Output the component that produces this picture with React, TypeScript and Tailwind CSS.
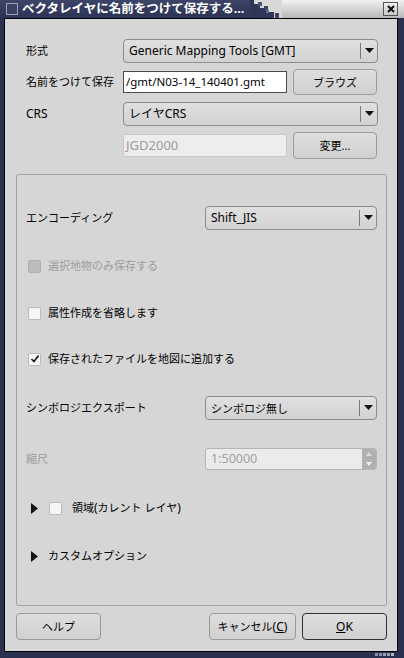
import React from "react";

const F = "font-['Noto_Sans','Noto_Sans_CJK_JP',sans-serif]";

function Arrow() {
  return (
    <svg width="9" height="6" viewBox="0 0 9 6">
      <polygon points="0,0 9,0 4.5,5" fill="#111" />
    </svg>
  );
}

function Combo({ text, className = "" }: { text: string; className?: string }) {
  return (
    <div
      className={`flex items-center h-full rounded-[4px] border border-[#8c8c8c] bg-gradient-to-b from-[#e0e0e0] to-[#d2d2d2] ${className}`}
    >
      <div className="flex-1 pl-[5px] text-[12px] text-black leading-none whitespace-nowrap">{text}</div>
      <div className="w-px h-[16px] bg-[#7a7a7a]" />
      <div className="w-[16px] flex items-center justify-center">
        <Arrow />
      </div>
    </div>
  );
}

function Btn({ children, className = "", strong = false }: { children: React.ReactNode; className?: string; strong?: boolean }) {
  return (
    <div
      className={`flex items-center justify-center rounded-[4px] border ${
        strong ? "border-[#303030]" : "border-[#9a9a9a]"
      } bg-gradient-to-b from-[#dedede] to-[#d0d0d0] text-[12px] text-black leading-none ${className}`}
    >
      {children}
    </div>
  );
}

function Check({ checked = false, disabled = false }: { checked?: boolean; disabled?: boolean }) {
  return (
    <div
      className={`w-[13px] h-[13px] rounded-[2px] border flex items-center justify-center ${
        disabled ? "bg-[#bdbdbd] border-[#b0b0b0]" : "bg-[#f6f6f6] border-[#bababa]"
      }`}
    >
      {checked && (
        <svg width="10" height="10" viewBox="0 0 10 10">
          <polyline points="1.5,5 4,7.5 8.5,1.5" fill="none" stroke="#111" strokeWidth="1.6" />
        </svg>
      )}
    </div>
  );
}

function Tri() {
  return (
    <svg width="7" height="11" viewBox="0 0 7 11">
      <polygon points="0,0 7,5.5 0,11" fill="#111" />
    </svg>
  );
}

export default function App() {
  return (
    <div className={`w-[404px] h-[658px] bg-[#2a3050] flex flex-col ${F}`}>
      {/* Title bar */}
      <div className="h-[18px] flex">
        <div className="w-[250px] bg-gradient-to-b from-[#3c4468] to-[#2c3354] flex items-center">
          <div className="ml-[6px] w-[12px] h-[12px] border border-[#9aa0b8] bg-[#3a4262]" />
          <div className="ml-[4px] text-[12.5px] font-bold text-white leading-none whitespace-nowrap">
            ベクタレイヤに名前をつけて保存する...
          </div>
        </div>
        <svg width="32" height="18" viewBox="0 0 32 18" className="shrink-0">
          <rect x="0" y="0" width="32" height="18" fill="#d8d8d8" />
          <rect x="0" y="0" width="4" height="18" fill="#2f3658" />
          <rect x="4" y="4" width="6" height="14" fill="#2f3658" />
          <rect x="10" y="8" width="8" height="10" fill="#2f3658" />
          <rect x="8" y="2" width="4" height="4" fill="#4a5275" />
          <rect x="14" y="6" width="4" height="4" fill="#3a4266" />
          <rect x="18" y="12" width="6" height="6" fill="#2f3658" />
          <rect x="25" y="13" width="4" height="5" fill="#3a4266" />
          <rect x="16" y="10" width="3" height="3" fill="#6a7090" />
        </svg>
        <div className="flex-1 bg-gradient-to-b from-[#f2f2f2] to-[#b8b8b8] flex items-center justify-end pr-[6px]">
          <div className="w-[15px] h-[14px] border border-[#555] bg-gradient-to-b from-[#f0f0f0] to-[#c8c8c8] flex items-center justify-center">
            <svg width="8" height="8" viewBox="0 0 8 8">
              <path d="M1 1 L7 7 M7 1 L1 7" stroke="#111" strokeWidth="2" />
            </svg>
          </div>
        </div>
      </div>

      {/* Content */}
      <div className="ml-[4px] w-[394px] h-[634px] border border-black bg-[#d6d6d6] flex flex-col">
        {/* top form */}
        <div className="pl-[21px] pr-[19px] pt-[20px] flex flex-col">
          <div className="flex h-[24px] items-center">
            <div className="w-[97px] text-[11px] text-black">形式</div>
            <div className="flex-1 h-full">
              <Combo text="Generic Mapping Tools [GMT]" />
            </div>
          </div>
          <div className="flex h-[26px] items-center mt-[6px]">
            <div className="w-[97px] text-[11px] text-black whitespace-nowrap">名前をつけて保存</div>
            <div className="w-[164px] h-[22px] bg-white border border-[#4a4a4a] flex items-center overflow-hidden">
              <span className="pl-[2px] text-[11.5px] text-black leading-none whitespace-nowrap">/gmt/N03-14_140401.gmt</span>
            </div>
            <Btn className="ml-[6px] w-[84px] h-full">
              <span className="text-[11px]">ブラウズ</span>
            </Btn>
          </div>
          <div className="flex h-[24px] items-center mt-[7px]">
            <div className="w-[97px] text-[12px] text-black">CRS</div>
            <div className="flex-1 h-full">
              <Combo text="レイヤCRS" />
            </div>
          </div>
          <div className="flex h-[27px] items-center mt-[6px]">
            <div className="w-[97px]" />
            <div className="w-[164px] h-[23px] bg-[#ededed] border border-[#c8c8c8] flex items-center">
              <span className="pl-[2px] text-[13px] text-[#9b9b9b] leading-none">JGD2000</span>
            </div>
            <Btn className="ml-[6px] w-[84px] h-full">
              <span className="text-[11px]">変更...</span>
            </Btn>
          </div>
        </div>

        {/* group box */}
        <div className="ml-[11px] mt-[15px] w-[371px] h-[432px] border border-[#a2a2a2] rounded-[2px] pl-[9px] pr-[9px] flex flex-col">
          <div className="flex h-[24px] items-center mt-[31px]">
            <div className="w-[179px] text-[11px] text-black">エンコーディング</div>
            <div className="flex-1 h-full">
              <Combo text="Shift_JIS" />
            </div>
          </div>
          <div className="flex h-[20px] items-center mt-[26px] pl-[2px]">
            <Check disabled />
            <span className="ml-[7px] text-[11px] text-[#9c9c9c]">選択地物のみ保存する</span>
          </div>
          <div className="flex h-[20px] items-center mt-[27px] pl-[2px]">
            <Check />
            <span className="ml-[7px] text-[11px] text-black">属性作成を省略します</span>
          </div>
          <div className="flex h-[20px] items-center mt-[26px] pl-[2px]">
            <Check checked />
            <span className="ml-[7px] text-[11px] text-black">保存されたファイルを地図に追加する</span>
          </div>
          <div className="flex h-[24px] items-center mt-[27px]">
            <div className="w-[179px] text-[11px] text-black">シンボロジエクスポート</div>
            <div className="flex-1 h-full">
              <Combo text="シンボロジ無し" className="[&>div:first-child]:text-[11px]" />
            </div>
          </div>
          <div className="flex h-[22px] items-center mt-[28px]">
            <div className="w-[179px] text-[11px] text-[#9c9c9c]">縮尺</div>
            <div className="flex-1 h-full rounded-[3px] border border-[#b4b4b4] bg-[#ebebeb] flex overflow-hidden">
              <div className="flex-1 flex items-center pl-[5px] text-[12.5px] text-[#a0a0a0] leading-none">1:50000</div>
              <div className="w-[14px] bg-[#b0b0b0] flex flex-col items-center justify-between py-[3px]">
                <svg width="6" height="4" viewBox="0 0 6 4"><polygon points="0,4 6,4 3,0" fill="#d8d8d8" /></svg>
                <svg width="6" height="4" viewBox="0 0 6 4"><polygon points="0,0 6,0 3,4" fill="#f0f0f0" /></svg>
              </div>
            </div>
          </div>
          <div className="flex h-[20px] items-center mt-[28px] pl-[5px]">
            <Tri />
            <div className="ml-[11px]">
              <Check />
            </div>
            <span className="ml-[10px] text-[12px] text-black">
              <span className="text-[11px]">領域</span>(<span className="text-[11px]">カレント レイヤ</span>)
            </span>
          </div>
          <div className="flex h-[20px] items-center mt-[28px] pl-[5px]">
            <Tri />
            <span className="ml-[10px] text-[11px] text-black">カスタムオプション</span>
          </div>
        </div>

        {/* bottom buttons */}
        <div className="ml-[11px] w-[371px] mt-[7px] flex h-[27px]">
          <Btn className="w-[85px] h-full">
            <span className="text-[11px]">ヘルプ</span>
          </Btn>
          <div className="flex-1" />
          <Btn className="w-[87px] h-full">
            <span className="text-[11px]">キャンセル</span>
            <span>(</span>
            <span className="underline">C</span>
            <span>)</span>
          </Btn>
          <Btn strong className="ml-[6px] w-[85px] h-full">
            <span className="underline">O</span>K
          </Btn>
        </div>
      </div>

      {/* bottom frame with resize grip */}
      <div className="flex-1 flex justify-end items-start pr-[10px] pt-[1px]">
        <div className="flex gap-[1px]">
          <div className="w-[3px] h-[3px] bg-[#8890a8]" />
          <div className="w-[3px] h-[3px] bg-[#8890a8]" />
          <div className="w-[3px] h-[3px] bg-[#9aa0b8]" />
          <div className="w-[3px] h-[3px] bg-[#9aa0b8]" />
          <div className="w-[3px] h-[3px] bg-[#b0b4c4]" />
        </div>
      </div>
    </div>
  );
}
